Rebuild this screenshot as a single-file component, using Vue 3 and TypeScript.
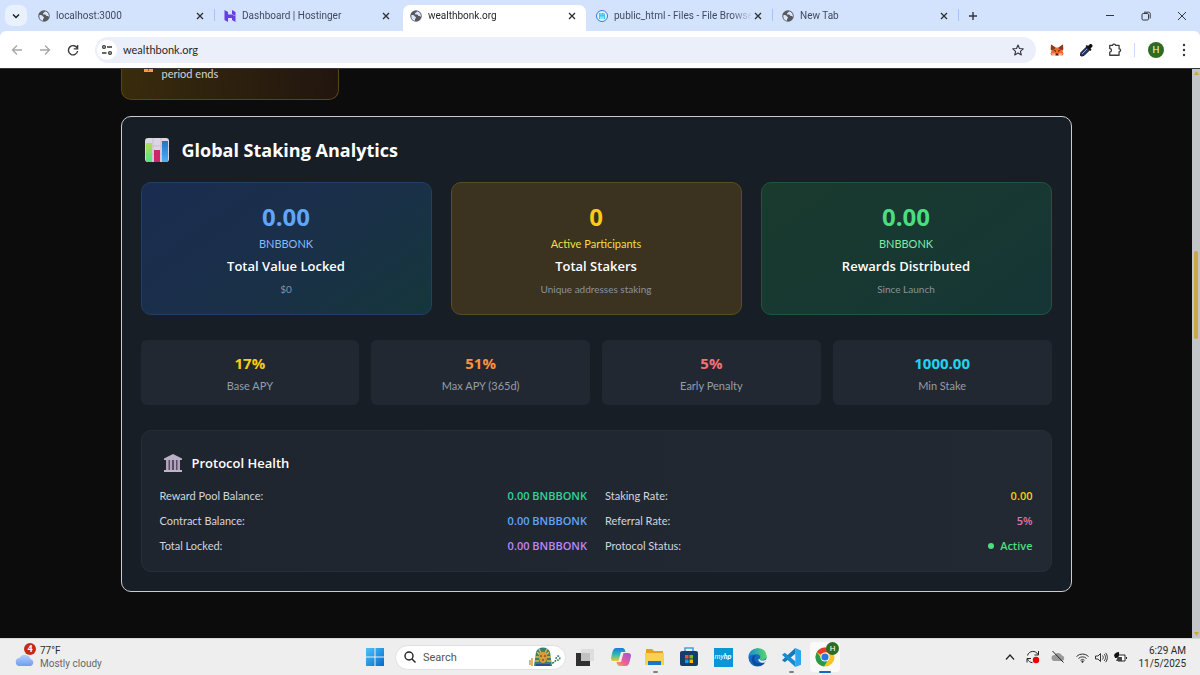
<script setup lang="ts">
interface Tab {
  title: string
  icon: 'globe' | 'hostinger' | 'files'
  active?: boolean
  divider?: boolean
}

const tabs: Tab[] = [
  { title: 'localhost:3000', icon: 'globe', divider: true },
  { title: 'Dashboard | Hostinger', icon: 'hostinger' },
  { title: 'wealthbonk.org', icon: 'globe', active: true },
  { title: 'public_html - Files - File Browse', icon: 'files', divider: true },
  { title: 'New Tab', icon: 'globe', divider: true },
]

const totals = [
  { tone: 'blue', value: '0.00', unit: 'BNBBONK', title: 'Total Value Locked', note: '$0' },
  { tone: 'gold', value: '0', unit: 'Active Participants', title: 'Total Stakers', note: 'Unique addresses staking' },
  { tone: 'green', value: '0.00', unit: 'BNBBONK', title: 'Rewards Distributed', note: 'Since Launch' },
]

const rates = [
  { tone: 'yellow', value: '17%', label: 'Base APY' },
  { tone: 'orange', value: '51%', label: 'Max APY (365d)' },
  { tone: 'red', value: '5%', label: 'Early Penalty' },
  { tone: 'cyan', value: '1000.00', label: 'Min Stake' },
]

const health = [
  [
    { label: 'Reward Pool Balance:', value: '0.00 BNBBONK', tone: 'emerald' },
    { label: 'Contract Balance:', value: '0.00 BNBBONK', tone: 'sky' },
    { label: 'Total Locked:', value: '0.00 BNBBONK', tone: 'violet' },
  ],
  [
    { label: 'Staking Rate:', value: '0.00', tone: 'yellow' },
    { label: 'Referral Rate:', value: '5%', tone: 'pink' },
    { label: 'Protocol Status:', value: 'Active', tone: 'lime', dot: true },
  ],
]
</script>

<template>
  <div class="desktop">
    <header class="tabstrip">
      <button class="tab-search" aria-label="Search tabs">
        <svg width="8" height="8" viewBox="0 0 8 8"><path d="M1 2.5 4 5.5 7 2.5" fill="none" stroke="#1f2023" stroke-width="1.5" /></svg>
      </button>
      <nav class="tabs" aria-label="Tabs">
        <div v-for="tab in tabs" :key="tab.title" class="tab" :class="{ active: tab.active, divider: tab.divider }">
          <svg v-if="tab.icon === 'globe'" class="favicon" viewBox="0 0 24 24">
            <circle cx="12" cy="12" r="11.5" fill="#56595e" />
            <path d="M3 10c3-.5 5 0 6 2s3 1 3 3-2 1.500-2 4v2.500C5 21 1.500 16 3 10zM14 2.500c0 2.500-3.500 2-4 4.500s2 1.500 4 2 1.500 3 4 3 2 1 4 1.500c.5-5-3-10-8-11z" fill="#dbe6fb" />
          </svg>
          <svg v-else-if="tab.icon === 'hostinger'" class="favicon" viewBox="0 0 24 24">
            <path d="M1 0l7 4v5h8l7 4H1zM16 0l7 4v8l-7-4zM23 24l-7-4v-4H8l-7-4h22zM8 24l-7-4v-8l7 4z" fill="#673de6" />
          </svg>
          <svg v-else class="favicon" viewBox="0 0 24 24">
            <circle cx="12" cy="12" r="11" fill="#e4f5fd" stroke="#3478e5" stroke-width="2" />
            <path d="M6 6h10l2 2v10H6z" fill="#40c4f4" />
            <path d="M9 6h6v4H9zM8 13h8v5H8z" fill="#8ce1fb" />
            <path d="M12.500 6v3" stroke="#1d84c7" stroke-width="1.500" />
          </svg>
          <span class="tab-title">{{ tab.title }}</span>
          <button class="tab-close" :aria-label="'Close ' + tab.title">
            <svg width="8" height="8" viewBox="0 0 8 8"><path d="M1 1l6 6M7 1 1 7" stroke="#2b2d31" stroke-width="1.3" /></svg>
          </button>
        </div>
        <button class="new-tab" aria-label="New tab">
          <svg width="10" height="10" viewBox="0 0 10 10"><path d="M5 1v8M1 5h8" stroke="#33363b" stroke-width="1.4" /></svg>
        </button>
      </nav>
      <div class="window-controls">
        <button aria-label="Minimize"><svg width="10" height="10" viewBox="0 0 10 10"><path d="M1 4.500h8" stroke="#33363b" /></svg></button>
        <button aria-label="Restore">
          <svg width="10" height="10" viewBox="0 0 10 10" fill="none" stroke="#33363b"><rect x="1" y="2.500" width="6.500" height="6.500" rx="1.200" /><path d="M3 1.200h4.500A1.500 1.500 0 0 1 9.200 3v4.500" /></svg>
        </button>
        <button aria-label="Close window"><svg width="10" height="10" viewBox="0 0 10 10"><path d="M1 1l8 8M9 1 1 9" stroke="#33363b" /></svg></button>
      </div>
    </header>

    <div class="toolbar">
      <button class="tool" aria-label="Back"><svg width="12" height="12" viewBox="0 0 12 12" fill="none" stroke="#a4a6aa" stroke-width="1.300"><path d="M11 6H2M6 1.500 1.500 6 6 10.500" /></svg></button>
      <button class="tool" aria-label="Forward"><svg width="12" height="12" viewBox="0 0 12 12" fill="none" stroke="#a4a6aa" stroke-width="1.300"><path d="M1 6h9M6 1.500 10.500 6 6 10.500" /></svg></button>
      <button class="tool" aria-label="Reload"><svg width="12" height="12" viewBox="0 0 12 12" fill="none" stroke="#3a3c40" stroke-width="1.400"><path d="M10.300 4.500A4.600 4.600 0 1 0 10.600 7" /><path d="M10.600 1v3.900H6.700" /></svg></button>
      <div class="omnibox">
        <button class="site-info" aria-label="View site information">
          <svg width="12" height="12" viewBox="0 0 12 12" fill="none" stroke="#33363b" stroke-width="1.300"><circle cx="3" cy="3" r="1.400" /><path d="M6 3h5M1 9h4.500" /><circle cx="9" cy="9" r="1.400" /></svg>
        </button>
        <input class="address" type="text" value="wealthbonk.org" aria-label="Address" />
        <button class="star" aria-label="Bookmark this tab">
          <svg width="12" height="12" viewBox="0 0 24 24" fill="none" stroke="#33363b" stroke-width="2.200" stroke-linejoin="round"><path d="M12 2l3 7 7.500.6-5.700 5 1.800 7.400L12 18l-6.600 4 1.800-7.400-5.700-5L9 9z" /></svg>
        </button>
      </div>
      <div class="extensions">
        <button class="ext" aria-label="Wallet extension">
          <svg width="14" height="12" viewBox="0 0 28 24">
            <path d="M2 1l9 6h6l9-6 1 9-2 4 2 5-2 4-6-1-3 2h-4l-3-2-6 1-2-4 2-5-2-4z" fill="#f0692a" />
            <path d="M2 1l9 6-2 4-7 1zM26 1l-9 6 2 4 7 1z" fill="#8b3a1d" />
            <path d="M7 12l5 1-1 3zM21 12l-5 1 1 3zM11 19h6l-1 3h-4z" fill="#38211b" />
            <path d="M3 19l7-1 1 4-6 1zM25 19l-7-1-1 4 6 1z" fill="#ffae83" />
          </svg>
        </button>
        <button class="ext" aria-label="Color picker">
          <svg width="14" height="14" viewBox="0 0 28 28">
            <path d="M3 25l1-6L15 8l6 6-11 11-5 1z" fill="#25356f" stroke="#121212" stroke-width="2" />
            <path d="M13 6l10 10 2-3-2-2 4-4c1-4-3-6-6-4l-3 3-2-2z" fill="#0e0f12" />
            <path d="M6 22 16 12" stroke="#8da5e8" stroke-width="2" />
          </svg>
        </button>
        <button class="ext" aria-label="Extensions">
          <svg width="14" height="14" viewBox="0 0 24 24" fill="none" stroke="#3a3c40" stroke-width="2.200" stroke-linejoin="round"><path d="M3 4h5c0-3 5-3 5 0h6v6c3.500 0 3.500 5 0 5v6H3v-5.500c4 0 4-6 0-6z" /></svg>
        </button>
      </div>
      <button class="profile" aria-label="Profile">H</button>
      <button class="menu" aria-label="Browser menu">
        <svg width="4" height="14" viewBox="0 0 4 14" fill="#33363b"><circle cx="2" cy="2" r="1.200" /><circle cx="2" cy="7" r="1.200" /><circle cx="2" cy="12" r="1.200" /></svg>
      </button>
    </div>

    <div class="viewport">
      <main class="page">
        <div class="container">
          <section class="notice">
            <svg class="lock" width="9" height="3" viewBox="0 0 9 3"><path d="M0 0h9v3H0z" fill="#f79a4d" /><path d="M4.500 0v2" stroke="#a84e28" /></svg>
            <span>period ends</span>
          </section>

          <section class="panel">
            <h2 class="panel-title">
              <svg width="26" height="26" viewBox="0 0 26 26">
                <defs>
                  <linearGradient id="bar-green" x1="0" y1="0" x2="0" y2="1"><stop offset="0" stop-color="#b2dd4c" /><stop offset="1" stop-color="#55e08c" /></linearGradient>
                  <linearGradient id="bar-blue" x1="0" y1="0" x2="0" y2="1"><stop offset="0" stop-color="#2273c4" /><stop offset="1" stop-color="#4db0f4" /></linearGradient>
                </defs>
                <rect x="1" y="1" width="24" height="24" rx="3" fill="#dcd6e4" />
                <path d="M9 1v24M17 1v24M1 9h24M1 17h24" stroke="#c7bfd2" />
                <rect x="2" y="6" width="6" height="19" fill="url(#bar-green)" />
                <rect x="10" y="13" width="6" height="12" fill="#d0246b" />
                <rect x="18" y="4" width="6" height="21" fill="url(#bar-blue)" />
              </svg>
              Global Staking Analytics
            </h2>

            <div class="totals">
              <article v-for="item in totals" :key="item.title" class="total" :class="item.tone">
                <p class="total-value">{{ item.value }}</p>
                <p class="total-unit">{{ item.unit }}</p>
                <h3 class="total-title">{{ item.title }}</h3>
                <p class="total-note">{{ item.note }}</p>
              </article>
            </div>

            <div class="rates">
              <article v-for="item in rates" :key="item.label" class="rate">
                <p class="rate-value" :class="'t-' + item.tone">{{ item.value }}</p>
                <p class="rate-label">{{ item.label }}</p>
              </article>
            </div>

            <section class="health">
              <h3 class="health-title">
                <svg width="20" height="20" viewBox="0 0 20 20">
                  <path d="M10 1l9 4.500V7H1V5.500z" fill="#b9b0c3" />
                  <path d="M3 7h14v10H3z" fill="#5c4a66" />
                  <path d="M3 7h2.500v10H3zM7 7h2v10H7zM11 7h2v10h-2zM14.500 7H17v10h-2.500z" fill="#afa5bb" />
                  <path d="M1 17h18v2H1z" fill="#bfb6c8" />
                </svg>
                Protocol Health
              </h3>
              <div class="health-columns">
                <dl v-for="(column, index) in health" :key="index" class="facts">
                  <div v-for="row in column" :key="row.label" class="fact">
                    <dt>{{ row.label }}</dt>
                    <dd :class="'t-' + row.tone"><i v-if="'dot' in row" class="dot"></i>{{ row.value }}</dd>
                  </div>
                </dl>
              </div>
            </section>
          </section>
        </div>
      </main>
      <div class="scrollbar" aria-hidden="true">
        <svg width="5" height="4" viewBox="0 0 5 4"><path d="M0 4 2.500 0 5 4z" fill="#c9a83c" /></svg>
        <div class="track"><div class="thumb"></div></div>
        <svg width="5" height="4" viewBox="0 0 5 4"><path d="M0 0h5L2.500 4z" fill="#c9a83c" /></svg>
      </div>
    </div>

    <footer class="taskbar">
      <div class="taskbar-side">
        <button class="weather">
          <span class="weather-icon">
            <svg width="20" height="14" viewBox="0 0 20 14">
              <defs><linearGradient id="cloud" x1="0" y1="0" x2="0" y2="1"><stop offset="0" stop-color="#b3d0fb" /><stop offset="1" stop-color="#6f9cf0" /></linearGradient></defs>
              <path d="M5 13a4 4 0 0 1-.5-8 6 6 0 0 1 11 1A3.600 3.600 0 0 1 15.500 13z" fill="url(#cloud)" />
            </svg>
            <b class="badge">4</b>
          </span>
          <span class="weather-text"><span>77°F</span><span class="muted">Mostly cloudy</span></span>
        </button>
      </div>

      <div class="apps">
        <button class="app" aria-label="Start">
          <svg width="18" height="18" viewBox="0 0 18 18">
            <defs><linearGradient id="win" x1="0" y1="0" x2="1" y2="1"><stop offset="0" stop-color="#4cc4f5" /><stop offset="1" stop-color="#0669cf" /></linearGradient></defs>
            <path d="M0 0h8.500v8.500H0zM9.500 0H18v8.500H9.500zM0 9.500h8.500V18H0zM9.500 9.500H18V18H9.500z" fill="url(#win)" />
          </svg>
        </button>
        <label class="search">
          <svg width="12" height="12" viewBox="0 0 12 12" fill="none" stroke="#222" stroke-width="1.400"><circle cx="5" cy="5" r="4" /><path d="M8 8l3.500 3.500" /></svg>
          <input type="text" placeholder="Search" aria-label="Search" />
          <svg width="32" height="20" viewBox="0 0 32 20">
            <path d="M5 19 7 5c2-6 12-6 14 0l2 14z" fill="#357f74" />
            <path d="M8 5l3 3M20 5l-3 3M6 10h4M18 10h4M6 14h4M18 14h4M10 2l2 4M18 2l-2 4" stroke="#e5b548" stroke-width="1.500" />
            <path d="M10 7c1-3 7-3 8 0v4c0 3-2 5-4 5s-4-2-4-5z" fill="#d79b37" />
            <path d="M11 9h2M15 9h2M13 13h2" stroke="#493d2a" />
            <path d="M7 17h14v2H7z" fill="#2c4c9b" />
            <path d="M1 18v-5M3 19v-8" stroke="#d19d37" stroke-width="1.500" />
            <path d="M23 16c5 0 3-7 6-7 3 1 2 5-1 4" fill="none" stroke="#36765b" stroke-width="1.400" stroke-dasharray="2 1" />
          </svg>
        </label>
        <button class="app wide" aria-label="Task view">
          <svg width="20" height="18" viewBox="0 0 20 18"><path d="M1 5h14v13H1z" fill="#303030" /><path d="M6 1h13v12H6z" fill="#dedede" /><path d="M6 5h9v8H6z" fill="#c2c2c2" /></svg>
        </button>
        <button class="app" aria-label="Copilot">
          <svg width="20" height="18" viewBox="0 0 20 18">
            <defs>
              <linearGradient id="cpa" x1="0" y1="0" x2="0" y2="1"><stop offset="0" stop-color="#2274dc" /><stop offset=".5" stop-color="#2cbcb0" /><stop offset="1" stop-color="#efc737" /></linearGradient>
              <linearGradient id="cpb" x1="1" y1="0" x2="0" y2="1"><stop offset="0" stop-color="#9757df" /><stop offset=".6" stop-color="#ee5e94" /><stop offset="1" stop-color="#fba857" /></linearGradient>
            </defs>
            <path d="M5 0h6c2.500 0 3 2 3.500 4H10L7.500 13H3c-3 0-3.500-2-2.500-5C1.500 3 2.500 0 5 0z" fill="url(#cpa)" />
            <path d="M15 18H9c-2.500 0-3-2-3.500-4H10l2.500-9H17c3 0 3.500 2 2.500 5-1 5-2 8-4.500 8z" fill="url(#cpb)" />
          </svg>
        </button>
        <button class="app running" aria-label="File Explorer">
          <svg width="20" height="18" viewBox="0 0 20 18"><path d="M1 1h6l2 2h9v13H1z" fill="#e3a21a" /><path d="M0 5h19v12H0z" fill="#fbd052" /><path d="M3 13h13v4H3z" fill="#1477cc" /></svg>
        </button>
        <button class="app" aria-label="Microsoft Store">
          <svg width="18" height="20" viewBox="0 0 18 20"><path d="M5 6V1h8v5" fill="none" stroke="#3aa6e3" stroke-width="1.600" /><rect y="4" width="18" height="15" rx="2" fill="#153d6b" /><path d="M5 8h3.500v3.500H5z" fill="#f25022" /><path d="M9.500 8H13v3.500H9.500z" fill="#7fba00" /><path d="M5 12.500h3.500V16H5z" fill="#00a4ef" /><path d="M9.500 12.500H13V16H9.500z" fill="#ffb900" /></svg>
        </button>
        <button class="app" aria-label="myHP"><span class="hp">my<b>hp</b></span></button>
        <button class="app" aria-label="Edge">
          <svg width="19" height="19" viewBox="0 0 20 20">
            <defs><linearGradient id="edge" x1="0" y1="0" x2="1" y2="0"><stop offset="0" stop-color="#188ad5" /><stop offset="1" stop-color="#56d865" /></linearGradient></defs>
            <circle cx="10" cy="10" r="9.500" fill="#126ac0" />
            <path d="M.5 9C2-2 19-3 19.500 8.500c0 5-6.500 5-7.500 3 2-2 .5-5-3-5-4 0-7 1-8.500 2.500z" fill="url(#edge)" />
            <path d="M12 11.500c1 2 5 2.500 7.500 0v1l-2 3c-3 .5-7-1-6.500-4z" fill="#eee" />
            <path d="M8 8c-4 5 2 10 9.500 7.500C14 21 4 20 4 12c0-3 2-5 4-4z" fill="#0e4d9e" />
          </svg>
        </button>
        <button class="app running" aria-label="Visual Studio Code">
          <svg width="19" height="19" viewBox="0 0 20 20"><path d="M14 0l6 2.500v15L14 20z" fill="#2ba7ee" /><path d="M14 0v6L3 15l-3-2z" fill="#1679bd" /><path d="M14 20v-6L3 5 0 7z" fill="#168cd4" /></svg>
        </button>
        <button class="app chrome" aria-label="Google Chrome">
          <svg width="20" height="20" viewBox="0 0 20 20">
            <circle cx="10" cy="10" r="9.500" fill="#f6c522" />
            <path d="M10 10 1.800 5.200A9.500 9.500 0 0 1 18.200 5.200H10z" fill="#e33b2e" />
            <path d="M1.800 5.200A9.500 9.500 0 0 0 9 19.500L13 13l-6-1z" fill="#259b4b" />
            <circle cx="10" cy="10" r="4.600" fill="#fff" /><circle cx="10" cy="10" r="3.600" fill="#2d74dc" />
          </svg>
          <b class="chrome-user">H</b>
        </button>
      </div>

      <div class="taskbar-side tray">
        <button aria-label="Show hidden icons"><svg width="10" height="8" viewBox="0 0 10 8"><path d="M1 6.500 5 2l4 4.500" fill="none" stroke="#222" stroke-width="1.200" /></svg></button>
        <button aria-label="Updates">
          <svg width="14" height="14" viewBox="0 0 14 14" fill="none" stroke="#222"><path d="M1.500 5.500C3 .5 9.500 0 12 4.500M12.500 1v4H8.500M1 12.500v-4h4M1.500 9c1 2 2.500 3.500 5 3.700" /><circle cx="10" cy="10" r="3.200" fill="#e00" stroke="none" /></svg>
        </button>
        <button aria-label="Cloud sync off"><svg width="14" height="12" viewBox="0 0 14 12"><path d="M3.500 10a3 3 0 0 1 0-6 4.300 4.300 0 0 1 7.500.5A2.800 2.800 0 0 1 11 10z" fill="#999" /><path d="M1.500 0l11 11.500" stroke="#222" /></svg></button>
        <button class="quick" aria-label="Network, volume and battery">
          <svg width="13" height="11" viewBox="0 0 13 11" fill="none" stroke="#333"><path d="M.5 4.500a8.500 8.500 0 0 1 12 0M2.500 6.500a5.700 5.700 0 0 1 8 0M4.500 8.300a3 3 0 0 1 4 0" /><circle cx="6.500" cy="9.700" r=".7" fill="#333" /></svg>
          <svg width="13" height="11" viewBox="0 0 13 11" fill="none" stroke="#333"><path d="M.5 4v3H3l2.500 2.500v-8L3 4zM7.500 3.500c1 1 1 3 0 4M9 2c2 2 2 5 0 7M10.600.8c2.300 2.700 2.300 6.700 0 9.400" /></svg>
          <svg width="13" height="11" viewBox="0 0 13 11"><path d="M4 3h7v6H4z" fill="#fff" stroke="#222" /><path d="M12 5h1v2h-1z" fill="#222" /><path d="M4 5h4v4H2z" fill="#444" /><path d="M0 3c1-2 3-3 5-3 .5 4-1 6-4 6z" fill="#111" /></svg>
        </button>
        <button class="clock"><span>6:29 AM</span><span>11/5/2025</span></button>
      </div>
    </footer>
  </div>
</template>

<style>
body {
  margin: 0;
  background: #0c0c0c;
}
</style>

<style scoped>
.desktop {
  display: flex;
  flex-direction: column;
  height: 100vh;
  font-family: Lato, "Open Sans", "Noto Sans", sans-serif;
  font-size: 11px;
  color: #d1d5db;
}
.desktop * {
  box-sizing: border-box;
}
button,
input {
  margin: 0;
  padding: 0;
  border: 0;
  background: none;
  font: inherit;
  color: inherit;
  outline: 0;
}
button {
  display: flex;
  align-items: center;
  justify-content: center;
  flex: none;
}
svg {
  display: block;
  flex: none;
}
p,
h2,
h3,
dl,
dd {
  margin: 0;
}
.panel-title,
.health-title,
.total-title,
.total-value,
.rate-value,
.fact dd {
  font-family: "Open Sans", "Noto Sans", sans-serif;
}

/* tab strip */
.tabstrip {
  position: relative;
  z-index: 1;
  display: flex;
  flex: none;
  height: 31px;
  padding-left: 5px;
  background: #d3e2fd;
}
.tab-search {
  width: 22px;
  height: 21px;
  margin: 5px 2px 0 0;
  border-radius: 7px;
  background: #e9f0fe;
}
.tabs {
  display: flex;
  flex: 1;
  min-width: 0;
}
.tab {
  position: relative;
  display: flex;
  flex: 0 1 186px;
  align-items: center;
  min-width: 0;
  padding: 0 9px;
  font-family: Roboto, "Open Sans", sans-serif;
  font-size: 10px;
  color: #3f4a5c;
}
.tab.divider::after {
  content: "";
  position: absolute;
  right: 0;
  top: 9px;
  height: 12px;
  width: 1px;
  background: #a5c3f7;
}
.tab.active {
  color: #26282c;
}
.tab.active::before {
  content: "";
  position: absolute;
  inset: 5px 1px 0 2px;
  border-radius: 7px 7px 0 0;
  background: #fff;
}
.favicon {
  position: relative;
  width: 12px;
  height: 12px;
  margin-right: 6px;
}
.tab-title {
  position: relative;
  flex: 1;
  overflow: hidden;
  white-space: nowrap;
  mask-image: linear-gradient(to right, #000 85%, transparent);
}
.tab-close {
  position: relative;
  width: 12px;
  height: 12px;
}
.new-tab {
  width: 28px;
}
.window-controls {
  display: flex;
}
.window-controls button {
  width: 36px;
}

/* toolbar */
.toolbar {
  display: flex;
  flex: none;
  align-items: center;
  height: 37px;
  padding-left: 3px;
  border-radius: 6px 6px 0 0;
  background: #fff;
  box-shadow: 0 -6px 0 #d3e2fd;
}
.tool {
  width: 28px;
  height: 28px;
}
.omnibox {
  display: flex;
  flex: 1;
  align-items: center;
  height: 26px;
  margin: 0 6px 0 8px;
  padding: 0 9px 0 2px;
  border-radius: 13px;
  background: #ebeff9;
}
.site-info {
  width: 20px;
  height: 20px;
  border-radius: 50%;
  background: #fff;
}
.address {
  flex: 1;
  min-width: 0;
  margin-left: 6px;
  color: #27292d;
}
.star {
  width: 18px;
}
.extensions {
  display: flex;
  padding-right: 5px;
  border-right: 1px solid #c9dafa;
}
.ext {
  width: 29px;
  height: 14px;
}
.profile {
  width: 16px;
  height: 16px;
  margin: 0 12px 0 13px;
  border-radius: 50%;
  background: #2f6b22;
  font-size: 9px;
  color: #fff;
}
.menu {
  width: 16px;
  margin-right: 8px;
}

/* page */
.viewport {
  display: flex;
  flex: 1;
  min-height: 0;
  overflow: hidden;
  border-top: 1px solid #37373a;
}
.page {
  flex: 1;
  min-width: 0;
  overflow: hidden;
  background: #0c0c0c;
}
.container {
  max-width: 951px;
  margin: 0 auto;
}
.notice {
  display: flex;
  gap: 9px;
  width: 23%;
  padding: 0 22px 21px;
  border: 1px solid #5a4512;
  border-top: 0;
  border-radius: 0 0 10px 10px;
  background: linear-gradient(100deg, #392c0d, #21150f);
  line-height: 9px;
}
.panel {
  margin-top: 16px;
  padding: 19px;
  border: 1px solid #c9ccd1;
  border-radius: 10px;
  background: #181e26;
}
.panel-title {
  display: flex;
  align-items: center;
  gap: 12px;
  margin-bottom: 18px;
  padding-left: 3px;
  font-size: 18px;
  line-height: 28px;
  color: #fff;
}
.totals {
  display: grid;
  grid-template-columns: repeat(3, 1fr);
  gap: 19px;
}
.total {
  padding: 18px 18px 17px;
  border: 1px solid;
  border-radius: 10px;
  text-align: center;
}
.blue {
  border-color: #204064;
  background: linear-gradient(145deg, #1a2c50, #1a3048 55%, #15363b);
}
.gold {
  border-color: #5a4e20;
  background: #3b3220;
}
.green {
  border-color: #205540;
  background: linear-gradient(145deg, #1a3a2e, #173832 60%, #153536);
}
.total-value {
  font-size: 24px;
  font-weight: 700;
  line-height: 32px;
}
.total-unit {
  margin: 2px 0;
  line-height: 18px;
}
.total-title {
  font-size: 13px;
  font-weight: 600;
  line-height: 22px;
  color: #fff;
}
.total-note {
  margin-top: 4px;
  font-size: 10px;
  line-height: 16px;
  color: #8b929d;
}
.blue .total-value { color: #60a5fa; }
.blue .total-unit { color: #86bdf8; }
.gold .total-value { color: #facc15; }
.gold .total-unit { color: #f5de43; }
.green .total-value { color: #4ade80; }
.green .total-unit { color: #7deca5; }
.rates {
  display: grid;
  grid-template-columns: repeat(4, 1fr);
  gap: 12px;
  margin: 25px 0;
}
.rate {
  padding: 12px 12px 9px;
  border-radius: 6px;
  background: #222832;
  text-align: center;
}
.rate-value {
  margin-bottom: 2px;
  font-size: 15px;
  font-weight: 700;
  line-height: 22px;
}
.rate-label {
  line-height: 20px;
  color: #969ca7;
}
.health {
  padding: 18px 18px 16px;
  border: 1px solid #282e38;
  border-radius: 10px;
  background: linear-gradient(90deg, #1f252f, #232932);
}
.health-title {
  display: flex;
  align-items: center;
  gap: 9px;
  margin-bottom: 10px;
  padding-left: 3px;
  font-size: 13px;
  font-weight: 600;
  line-height: 28px;
  color: #fff;
}
.health-columns {
  display: grid;
  grid-template-columns: 1fr 1fr;
  gap: 18px;
}
.facts {
  display: flex;
  flex-direction: column;
  gap: 7px;
}
.fact {
  display: flex;
  justify-content: space-between;
  line-height: 18px;
}
.fact dd {
  display: flex;
  align-items: center;
  gap: 6px;
  font-weight: 600;
}
.dot {
  width: 6px;
  height: 6px;
  border-radius: 50%;
  background: currentColor;
}
.t-yellow { color: #facc15; }
.t-orange { color: #fb923c; }
.t-red { color: #f87171; }
.t-cyan { color: #22d3ee; }
.t-emerald { color: #34d399; }
.t-sky { color: #60a5fa; }
.t-violet { color: #c084fc; }
.t-pink { color: #e072b4; }
.t-lime { color: #4ade80; }

/* page scrollbar */
.scrollbar {
  display: flex;
  flex: none;
  flex-direction: column;
  align-items: center;
  width: 8px;
  padding: 2px 0;
  background: #c2c5c9;
}
.track {
  display: grid;
  flex: 1;
  grid-template-rows: 175fr 88fr 292fr;
}
.thumb {
  grid-row: 2;
  width: 4px;
  border-radius: 2px;
  background: #c9a742;
}

/* taskbar */
.taskbar {
  display: flex;
  flex: none;
  align-items: center;
  height: 37px;
  border-top: 1px solid #d8d8d8;
  background: #eee;
  font-family: Roboto, "Open Sans", sans-serif;
  font-size: 10px;
  color: #2b2b2b;
}
.taskbar-side {
  display: flex;
  flex: 1;
}
.weather {
  gap: 4px;
  padding-left: 15px;
  text-align: left;
}
.weather-icon {
  position: relative;
  width: 21px;
  padding-top: 6px;
}
.badge {
  position: absolute;
  top: -4px;
  left: 9px;
  width: 12px;
  border-radius: 6px;
  background: #c42b1c;
  font-size: 9px;
  line-height: 12px;
  text-align: center;
  color: #fff;
}
.weather-text,
.clock {
  display: flex;
  flex-direction: column;
  line-height: 13px;
}
.muted {
  color: #666;
}
.apps {
  display: flex;
  align-items: center;
  padding-left: 14px;
}
.app {
  position: relative;
  width: 34px;
  height: 34px;
}
.app.wide {
  width: 38px;
}
.search {
  display: flex;
  align-items: center;
  width: 171px;
  height: 25px;
  margin: 0 0 0 3px;
  padding: 0 4px 0 8px;
  border: 1px solid #e0e0e0;
  border-radius: 13px;
  background: #fff;
}
.search input {
  flex: 1;
  min-width: 0;
  margin-left: 7px;
  font-size: 11px;
}
.search input::placeholder {
  color: #555;
  opacity: 1;
}
.running::after,
.chrome::after {
  content: "";
  position: absolute;
  bottom: 1px;
  width: 5px;
  height: 2px;
  border-radius: 1px;
  background: #808080;
}
.chrome::after {
  width: 12px;
  background: #0f6cbd;
}
.chrome::before {
  content: "";
  position: absolute;
  inset: 2px;
  border-radius: 4px;
  background: #fafafa;
}
.chrome svg {
  position: relative;
}
.chrome-user {
  position: absolute;
  top: 2px;
  right: 3px;
  width: 13px;
  border-radius: 7px;
  background: #2f6b22;
  font-size: 8px;
  font-weight: 400;
  line-height: 13px;
  color: #fff;
}
.hp {
  width: 19px;
  background: #0a96d6;
  font-size: 7px;
  font-style: italic;
  line-height: 19px;
  color: #fff;
}
.tray {
  align-items: center;
  justify-content: flex-end;
  gap: 11px;
  padding-right: 14px;
}
.quick {
  gap: 6px;
}
.clock {
  align-items: flex-end;
}
</style>
